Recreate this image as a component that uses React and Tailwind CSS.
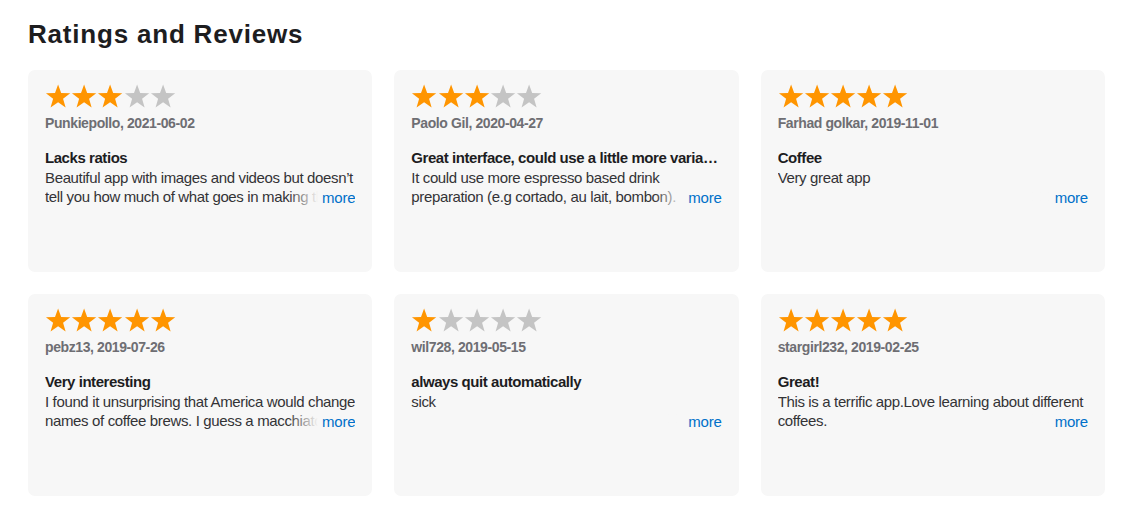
import React from "react";

const reviews = [
  { stars: 3, author: "Punkiepollo, 2021-06-02", title: "Lacks ratios", body: "Beautiful app with images and videos but doesn’t tell you how much of what goes in making the drinks. It would be nice to have the ratios listed for each recipe." },
  { stars: 3, author: "Paolo Gil, 2020-04-27", title: "Great interface, could use a little more variation", body: "It could use more espresso based drink preparation (e.g cortado, au lait, bombon).\nAlso more iced options would be great." },
  { stars: 5, author: "Farhad golkar, 2019-11-01", title: "Coffee", body: "Very great app" },
  { stars: 5, author: "pebz13, 2019-07-26", title: "Very interesting", body: "I found it unsurprising that America would change names of coffee brews. I guess a macchiato is now something else entirely in a lot of places." },
  { stars: 1, author: "wil728, 2019-05-15", title: "always quit automatically", body: "sick" },
  { stars: 5, author: "stargirl232, 2019-02-25", title: "Great!", body: "This is a terrific app.Love learning about different coffees." },
];

function Star({ filled }) {
  return (
    <svg width="26.2" height="26" viewBox="0 0 24 24" className="block shrink-0">
      <polygon
        points="12,0.4 14.85,8.25 23.2,8.45 16.6,13.5 18.95,21.7 12,16.95 5.05,21.7 7.4,13.5 0.8,8.45 9.15,8.25"
        fill={filled ? "#ff9500" : "#c4c4c4"}
      />
    </svg>
  );
}

function Card({ r }) {
  return (
    <div className="bg-[#f7f7f7] rounded-[7px] h-[202px] pt-[14px] px-[17px]">
      <div className="flex">
        {[0, 1, 2, 3, 4].map((i) => (
          <Star key={i} filled={i < r.stars} />
        ))}
      </div>
      <div className="text-[14px] leading-[17px] font-bold text-[#6e6e73] tracking-[-0.4px] mt-[5px]">{r.author}</div>
      <div className="text-[15px] leading-[19px] font-bold text-[#1d1d1f] tracking-[-0.44px] mt-[16px] truncate">{r.title}</div>
      <div className="relative h-[38px] overflow-hidden mt-[1px]">
        <p className="text-[15px] leading-[19px] text-[#333336] tracking-[-0.36px] whitespace-pre-line">{r.body}</p>
        <div className="absolute right-0 bottom-0 flex h-[19px]">
          <div className="w-[30px] h-full bg-gradient-to-r from-[#f7f7f7]/0 to-[#f7f7f7]"></div>
          <span className="bg-[#f7f7f7] pl-[4px] text-[15px] leading-[19px] text-[#0070c9] tracking-[-0.2px] translate-y-[1px]">more</span>
        </div>
      </div>
    </div>
  );
}

export default function App() {
  return (
    <div className="bg-white min-h-[513px] px-[28px] pt-[17px]" style={{ fontFamily: '"Liberation Sans", Arial, Helvetica, sans-serif' }}>
      <h2 className="text-[26px] leading-[34px] font-bold text-[#1d1d1f] tracking-[0.8px]">Ratings and Reviews</h2>
      <div className="grid grid-cols-3 gap-x-[22px] gap-y-[22px] mt-[19px] w-[1077px]">
        {reviews.map((r, i) => (
          <Card key={i} r={r} />
        ))}
      </div>
    </div>
  );
}
